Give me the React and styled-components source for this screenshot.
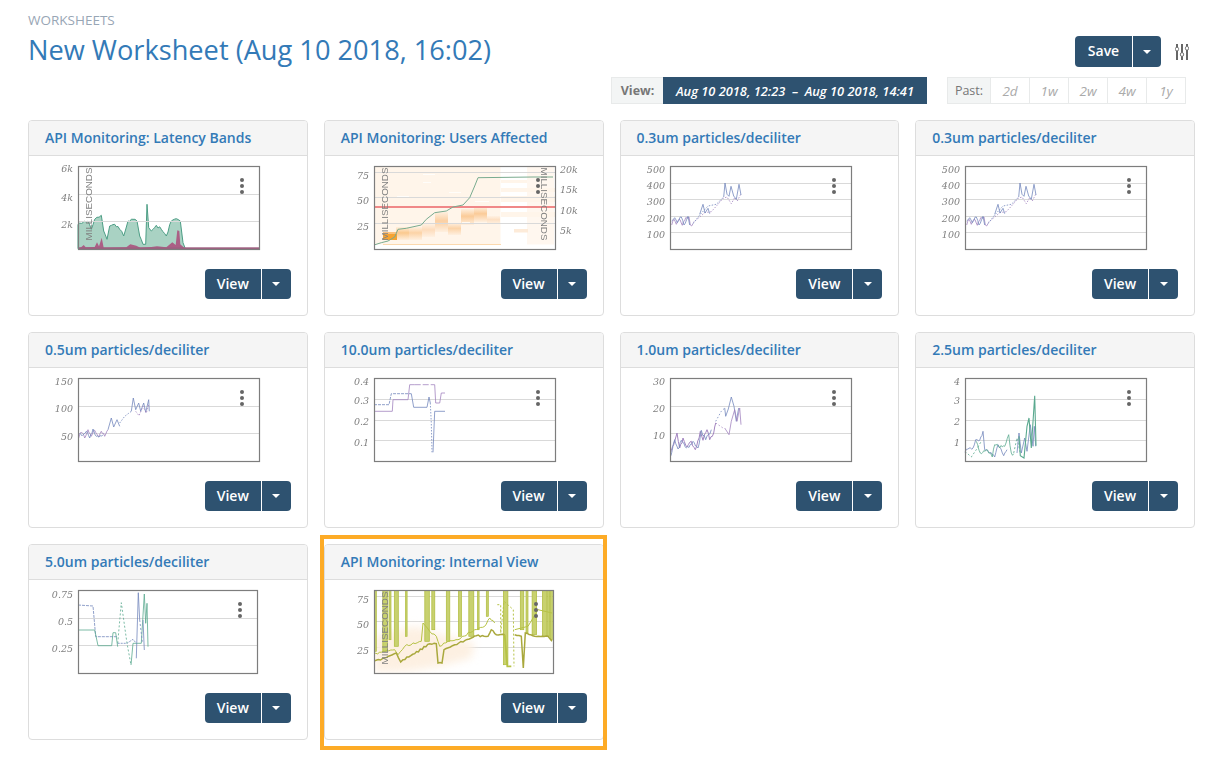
import React from "react";
import styled, { createGlobalStyle } from "styled-components";

const GlobalStyle = createGlobalStyle`
  html, body { margin: 0; padding: 0; background: #fff; }
  body { font-family: "Open Sans", "Liberation Sans", sans-serif; color: #333; }
`;

// points are read off 3x crops of the plots, so scale them back down
const parse = (str) =>
  str
    .trim()
    .split(/\s+/)
    .map((p) => p.split(",").map(Number));

const trace = (str, ox, oy) =>
  parse(str)
    .map(([x, y]) => `${((x - ox) / 3).toFixed(1)},${((y - oy) / 3).toFixed(1)}`)
    .join(" ");

// adds some noise along a traced line, the real data is never smooth
const rough = (str, amp, step = 6) => {
  const pts = parse(str);
  const out = [];
  pts.slice(1).forEach(([x, y], i) => {
    const [px, py] = pts[i];
    const n = Math.max(1, Math.round(Math.abs(x - px) / step));
    for (let k = 0; k < n; k++) {
      const t = k / n;
      const cx = px + (x - px) * t;
      const wob = k === 0 ? 0 : Math.sin(cx * 1.7) * amp + Math.sin(cx * 0.61) * amp * 0.7;
      out.push(`${cx.toFixed(1)},${(py + (y - py) * t + wob).toFixed(1)}`);
    }
  });
  const last = pts[pts.length - 1];
  out.push(`${last[0]},${last[1]}`);
  return out.join(" ");
};

const BLUE = "#7488bd";
const PURPLE = "#a284bf";
const TEAL = "#5aa98f";
const OLIVE = "#b6c245";

const Line = ({ points, color, dash, width = 0.8, ox, oy, noise }) => (
  <polyline
    points={trace(noise ? rough(points, noise, 4) : points, ox, oy)}
    fill="none"
    stroke={color}
    strokeWidth={width}
    strokeDasharray={dash}
  />
);

const Heat = () => {
  const blobs = [
    [22, 61, 13, "#fbc98e"], [35, 61, 13, "#fcd3a6"], [48, 58, 13, "#fddcbc"], [61, 46, 20, "#fbcfa2"],
    [74, 57, 12, "#fcd3a8"], [87, 43, 16, "#fbcb98"], [100, 41, 15, "#fbcb98"], [113, 50, 8, "#fde0c4"],
  ];
  return (
    <g>
      <defs>
        <linearGradient id="heatFade" x1="0" y1="0" x2="0" y2="1">
          <stop offset="0" stopColor="#fff3e6" stopOpacity="0.9" />
          <stop offset="0.45" stopColor="#fff3e6" stopOpacity="0" />
          <stop offset="1" stopColor="#fff3e6" stopOpacity="0.9" />
        </linearGradient>
      </defs>
      <rect x="0.5" y="0.5" width="126" height="78" fill="#fff5ea" />
      <rect x="153" y="0.5" width="27" height="78" fill="#fff7ef" />
      <rect x="127" y="14" width="26" height="3" fill="#fff5ea" />
      <rect x="127" y="22" width="54" height="4" fill="#fff5ea" />
      <rect x="127" y="30" width="54" height="6" fill="#fff5ea" />
      <rect x="127" y="46" width="54" height="5" fill="#fff5ea" />
      <rect x="140" y="63" width="14" height="3.5" fill="#fdebd9" />
      {blobs.map(([x, y, h, fill]) => (
        <g key={x}>
          <rect x={x} y={y} width="13" height={h} fill={fill} />
          <rect x={x} y={y} width="13" height={h} fill="url(#heatFade)" />
        </g>
      ))}
      <rect x="9" y="66" width="14" height="8" fill="#f6a332" />
      <rect x="9" y="66" width="14" height="2" fill="#fbc27d" />
      <rect x="9" y="78" width="118" height="1" fill="#fcd9ae" />
      <path d="M23 6h14v.8H23zM49 8h12v.8H49zM88 6h12v.8H88zM49 16h8v.8h-8zM23 30h12v.8H23zM75 26h12v.8H75zM101 35h14v.8h-14zM88 56h8v.8h-8z" fill="#fff" />
    </g>
  );
};

const Internal = () => {
  const bars = [
    [182, 365, 2], [211, 365, 4.5], [226, 330, 2], [245, 350, 4], [275, 320, 1.6], [337, 335, 4.5], [356, 300, 3],
    [400, 335, 3.5], [436, 320, 3], [470, 320, 5], [491, 300, 1.6], [518, 260, 2], [573, 405, 4.5],
    [622, 300, 3.5], [637, 310, 2], [659, 315, 4.5], [690, 320, 4.5], [702, 320, 2], [710, 330, 2],
  ];
  return (
    <g>
      <clipPath id="internalClip">
        <rect x="0" y="0" width="179" height="83" />
      </clipPath>
      <g clipPath="url(#internalClip)">
        <polygon
          points={trace("180,320 300,290 400,320 480,340 470,385 380,410 280,425 180,428", 178, 181)}
          fill="#fdf0e2"
          style={{ filter: "blur(4px)" }}
        />
        {bars.map(([x, y, w]) => (
          <rect
            key={x}
            x={((x - 178) / 3 - w / 2).toFixed(1)}
            y="-1"
            width={w}
            height={((y - 181) / 3 + 1).toFixed(1)}
            fill="#c8d16f"
            stroke="#aebb3a"
            strokeWidth="0.7"
          />
        ))}
        <Line ox={178} oy={181} color={OLIVE} width={1} points={rough("178,375 205,365 240,360 250,375 270,350 320,335 325,280 345,305 365,320 375,350 400,335 430,330 480,300 510,290 525,265 540,280", 2)} />
        <Line ox={178} oy={181} color={OLIVE} width={1} dash="2 2" points="548,225 558,225 558,310 568,215 596,240 598,410" />
        <Line ox={178} oy={181} color={OLIVE} width={1} points="600,300 640,290 670,240 712,250" />
        <Line ox={178} oy={181} color="#a9a83c" width={1.5} points={rough("178,395 210,385 245,370 258,397 265,390 300,372 345,342 365,342 370,400 382,400 388,360 420,345 470,325 485,318 520,320 530,300 545,315 570,315", 1.5)} />
        <Line ox={178} oy={181} color={OLIVE} width={1.8} points="570,315 578,410 590,410" />
        <Line ox={178} oy={181} color="#a9a83c" width={1.5} points={rough("600,315 620,320 626,415 632,310 660,320 700,320 712,335", 1.5)} />
      </g>
    </g>
  );
};

const Bands = () => (
  <g>
    <polygon
      points={trace(`175,403 ${rough("175,330 190,325 205,320 215,345 225,315 245,303 252,350 262,375 270,335 285,330 300,345 312,365 325,320 340,315 352,320 360,365 370,390 378,390", 2.5)} 382,270 387,340 ${rough("395,350 410,333 425,345 440,365 455,320 470,313 482,320 490,385", 2.5)} 497,403`, 175, 155)}
      fill="#a9d2c3"
      stroke="#4b9d84"
      strokeWidth="1"
    />
    <polygon
      points={trace("175,403 186,397 192,392 198,399 225,398 232,384 238,396 246,370 252,400 320,399 332,390 350,394 362,400 395,398 412,396 440,399 458,384 468,392 473,348 479,350 482,390 497,403", 175, 155)}
      fill="#ab5f85"
    />
    <rect x="0" y="81.3" width="181" height="1.7" fill="#9e6080" />
  </g>
);

const charts = {
  bands: {
    ticks: [["6k", 2], ["4k", 31], ["2k", 58]],
    grid: [28, 55],
    axis: true,
    Under: Bands,
  },
  users: {
    ticks: [["75", 9], ["50", 34], ["25", 60]],
    grid: [6, 31, 57],
    axis: true,
    right: [["20k", 3], ["15k", 23], ["10k", 44], ["5k", 64]],
    Under: Heat,
    lines: [
      { ox: 163, oy: 155, color: "#f08888", width: 2, points: "163,278 706,278" },
      { ox: 163, oy: 155, color: "#79ab8f", width: 1, points: "163,392 185,385 205,380 225,368 235,345 260,342 305,332 320,315 345,295 380,290 400,278 430,272 450,250 465,215 475,190 640,188 700,188" },
    ],
  },
  p03: {
    ticks: [["500", 3], ["400", 19], ["300", 35], ["200", 52], ["100", 68]],
    grid: [17, 33, 50, 66],
    lines: [
      { ox: 91, oy: 35, color: PURPLE, noise: 3, points: "96,212 103,195 110,210 118,195 128,213 138,190 148,188 152,212 160,208" },
      { ox: 91, oy: 35, color: BLUE, noise: 3, points: "96,200 105,190 113,205 125,188 133,212 145,186 150,212" },
      { ox: 91, oy: 35, color: PURPLE, dash: "1.5 1.5", points: "160,205 180,188 195,175 215,172 235,150 250,132 262,128 275,148 285,130 293,140 303,120" },
      { ox: 91, oy: 35, color: BLUE, dash: "1.5 1.5", points: "160,208 180,182 205,155 230,150 252,128" },
      { ox: 91, oy: 35, color: BLUE, points: "180,180 190,150 196,176 205,162 210,178" },
      { ox: 91, oy: 35, color: BLUE, points: "252,128 256,86 262,120 268,126 274,96 282,125 290,135 298,90 304,122" },
    ],
  },
  p05: {
    ticks: [["150", 3], ["100", 30], ["50", 58]],
    grid: [28, 55],
    lines: [
      { ox: 115, oy: 25, color: PURPLE, noise: 3, points: "117,205 125,187 135,205 145,180 155,200 165,182 175,200 185,185 195,200 205,180" },
      { ox: 115, oy: 25, color: BLUE, noise: 3, points: "120,190 130,195 140,185 150,205 160,178 170,200 190,195" },
      { ox: 115, oy: 25, color: BLUE, points: "205,180 215,145 222,172 232,150 240,170" },
      { ox: 115, oy: 25, color: BLUE, dash: "1.5 1.5", points: "240,160 255,140 275,125" },
      { ox: 115, oy: 25, color: BLUE, points: "275,125 281,85 288,120 297,100 303,125 312,100 318,128 327,90 329,125" },
      { ox: 115, oy: 25, color: PURPLE, dash: "1.5 1.5", points: "288,125 298,138 310,110 320,130 327,105" },
    ],
  },
  p10: {
    ticks: [["0.4", 3], ["0.3", 22], ["0.2", 43], ["0.1", 64]],
    grid: [21, 42, 62],
    lines: [
      { ox: 103, oy: 25, color: PURPLE, points: "103,125 158,125 160,90 205,90 210,45 225,45" },
      { ox: 103, oy: 25, color: PURPLE, dash: "6 2", points: "225,45 285,45" },
      { ox: 103, oy: 25, color: PURPLE, points: "285,45 288,100 300,100 305,70 316,70" },
      { ox: 103, oy: 25, color: BLUE, dash: "3 1", points: "103,105 148,105 155,72 215,72" },
      { ox: 103, oy: 25, color: BLUE, points: "215,72 222,113 262,113 268,82 272,100" },
      { ox: 103, oy: 25, color: BLUE, dash: "1.5 1.5", points: "272,100 275,160 277,248" },
      { ox: 103, oy: 25, color: BLUE, points: "280,248 285,125 316,125" },
    ],
  },
  p1: {
    ticks: [["30", 3], ["20", 30], ["10", 57]],
    grid: [28, 55],
    lines: [
      { ox: 121, oy: 25, color: PURPLE, width: 1, noise: 4, points: "122,250 132,225 142,190 150,235 160,205 172,232 185,215 197,240 212,185 220,212 232,180 240,210 252,190 258,160" },
      { ox: 121, oy: 25, color: BLUE, noise: 4, points: "124,258 135,210 145,238 155,212 170,235 190,215 205,235 215,182 228,210 245,180" },
      { ox: 121, oy: 25, color: BLUE, dash: "1.5 2", points: "258,155 275,125 285,115" },
      { ox: 121, oy: 25, color: BLUE, points: "285,115 288,140 296,118 305,82 313,110 320,155 327,115" },
      { ox: 121, oy: 25, color: PURPLE, dash: "1.5 2", points: "258,160 280,175" },
      { ox: 121, oy: 25, color: PURPLE, points: "285,175 298,195 305,155 315,120 322,155 330,115 334,165" },
    ],
  },
  p25: {
    ticks: [["4", 3], ["3", 22], ["2", 43], ["1", 64]],
    grid: [21, 42, 62],
    lines: [
      { ox: 106, oy: 25, color: BLUE, noise: 3, points: "106,248 118,236 130,235 138,210 150,212 160,185 165,240 180,250 195,262 205,225 222,258 232,240" },
      { ox: 106, oy: 25, color: TEAL, dash: "2 2", points: "106,245 125,262 140,240 155,215" },
      { ox: 106, oy: 25, color: TEAL, noise: 4, points: "140,215 152,250 170,240 188,262 195,225 210,235 225,230 237,195 245,250 252,252" },
      { ox: 106, oy: 25, color: TEAL, dash: "2 2", points: "252,250 262,205 272,250" },
      { ox: 106, oy: 25, color: BLUE, points: "262,250 268,190 275,250 285,205 292,245 302,165 310,230 314,170 318,230" },
      { ox: 106, oy: 25, color: TEAL, width: 1.1, points: "268,200 272,258 283,265 292,170 298,145 305,235 315,78 319,228" },
    ],
  },
  p5: {
    ticks: [["0.75", 4], ["0.5", 31], ["0.25", 58]],
    grid: [28, 55],
    plotW: 179,
    lines: [
      { ox: 115, oy: 30, color: BLUE, dash: "3 1", points: "115,75 160,78 168,170 232,170" },
      { ox: 115, oy: 30, color: TEAL, points: "115,150 165,150 175,197 216,197 220,158 228,158 234,200" },
      { ox: 115, oy: 30, color: BLUE, dash: "2 1", points: "234,190 262,190 280,178 290,190" },
      { ox: 115, oy: 30, color: TEAL, dash: "2 2", points: "234,190 245,68 262,190 274,255" },
      { ox: 115, oy: 30, color: TEAL, points: "274,255 280,190 305,190 314,42 318,130 322,70 325,200" },
      { ox: 115, oy: 30, color: BLUE, points: "290,235 296,38 300,120" },
      { ox: 115, oy: 30, color: BLUE, dash: "2 2", points: "300,120 308,185" },
      { ox: 115, oy: 30, color: BLUE, points: "310,120 314,210" },
    ],
  },
  internal: {
    ticks: [["75", 9], ["50", 34], ["25", 60]],
    grid: [6, 31, 57],
    plotW: 179,
    axis: true,
    Under: Internal,
  },
};

const cards = [
  { title: "API Monitoring: Latency Bands", chart: "bands" },
  { title: "API Monitoring: Users Affected", chart: "users" },
  { title: "0.3um particles/deciliter", chart: "p03" },
  { title: "0.3um particles/deciliter", chart: "p03" },
  { title: "0.5um particles/deciliter", chart: "p05" },
  { title: "10.0um particles/deciliter", chart: "p10" },
  { title: "1.0um particles/deciliter", chart: "p1" },
  { title: "2.5um particles/deciliter", chart: "p25" },
  { title: "5.0um particles/deciliter", chart: "p5" },
  { title: "API Monitoring: Internal View", chart: "internal", highlighted: true },
];

const Chart = ({ name }) => {
  const { ticks, grid, axis, right, Under, lines = [], plotW = 181 } = charts[name];
  return (
    <ChartBox>
      <svg width="270" height="100" viewBox="-49 -10 270 100">
        {Under && name !== "internal" && <Under />}
        {grid.map((y) => (
          <line key={y} x1="0" x2={plotW} y1={y + 0.5} y2={y + 0.5} stroke="#d9d9d9" />
        ))}
        {Under && name === "internal" && <Under />}
        {lines.map((l, i) => (
          <Line key={i} {...l} />
        ))}
        <rect x="0.5" y="0.5" width={plotW} height="83" fill="none" stroke="#7d7d7d" strokeWidth="1.2" />
        <AxisGroup>
          {ticks.map(([label, y]) => (
            <text key={label} x="-5" y={y + 3.5} textAnchor="end">
              {label}
            </text>
          ))}
          {right &&
            right.map(([label, y]) => (
              <text key={label} x="186" y={y + 3.5}>
                {label}
              </text>
            ))}
        </AxisGroup>
        {axis && (
          <UnitLabel transform="translate(14 38) rotate(-90)" textAnchor="middle">
            MILLISECONDS
          </UnitLabel>
        )}
        {right && (
          <UnitLabel transform="translate(166.5 38) rotate(90)" textAnchor="middle">
            MILLISECONDS
          </UnitLabel>
        )}
      </svg>
      <Kebab $narrow={plotW < 181}>
        <i />
        <i />
        <i />
      </Kebab>
    </ChartBox>
  );
};

const SplitButton = ({ label, $wide }) => (
  <ButtonGroup>
    <MainButton $wide={$wide}>{label}</MainButton>
    <CaretButton $wide={$wide}>
      <Caret />
    </CaretButton>
  </ButtonGroup>
);

const App = () => (
  <>
    <GlobalStyle />
    <Page>
      <Header>
        <div>
          <Crumb>Worksheets</Crumb>
          <Title>New Worksheet (Aug 10 2018, 16:02)</Title>
        </div>
        <Controls>
          <SaveRow>
            <SplitButton label="Save" $wide />
            <SettingsIcon width="14" height="16" viewBox="0 0 14 16">
              <path d="M2 0v16M7 0v16M12 0v16" stroke="#666" strokeWidth="2" fill="none" />
              <rect x="0.4" y="3.4" width="3.2" height="3.4" rx="1.2" fill="#fff" stroke="#666" strokeWidth="0.9" />
              <rect x="5.4" y="8.8" width="3.2" height="3.4" rx="1.2" fill="#fff" stroke="#666" strokeWidth="0.9" />
              <rect x="10.4" y="2.6" width="3.2" height="3.4" rx="1.2" fill="#fff" stroke="#666" strokeWidth="0.9" />
            </SettingsIcon>
          </SaveRow>
          <RangeRow>
            <RangeGroup>
              <RangeLabel $width={51}>View:</RangeLabel>
              <RangeValue>Aug 10 2018, 12:23 {" – "} Aug 10 2018, 14:41</RangeValue>
            </RangeGroup>
            <RangeGroup>
              <RangeLabel $width={42} $light>Past:</RangeLabel>
              {["2d", "1w", "2w", "4w", "1y"].map((p) => (
                <PastOption key={p}>{p}</PastOption>
              ))}
            </RangeGroup>
          </RangeRow>
        </Controls>
      </Header>
      <CardGrid>
        {cards.map((c, i) => (
          <Card key={i} $highlighted={c.highlighted}>
            <CardHeader>{c.title}</CardHeader>
            <Chart name={c.chart} />
            <CardFooter>
              <SplitButton label="View" />
            </CardFooter>
          </Card>
        ))}
      </CardGrid>
    </Page>
  </>
);

const Page = styled.div`
  width: 1217px;
  height: 775px;
  box-sizing: border-box;
  padding: 0 22px 0 28px;
  overflow: hidden;
`;
const Header = styled.div`
  height: 120px;
  display: flex;
  justify-content: space-between;
`;
const Crumb = styled.div`
  margin-top: 11px;
  font-size: 13.5px;
  line-height: 18px;
  color: #98a6b5;
  text-transform: uppercase;
`;
const Title = styled.h1`
  margin: 2px 0 0;
  font-size: 27.2px;
  line-height: 37px;
  font-weight: 400;
  color: #337ab7;
`;
const Controls = styled.div`
  display: flex;
  flex-direction: column;
  align-items: flex-end;
  padding: 36px 9px 0 0;
`;
const SaveRow = styled.div`
  display: flex;
  align-items: center;
`;
const SettingsIcon = styled.svg`
  margin-left: 14px;
  margin-right: -3px;
  display: block;
`;
const RangeRow = styled.div`
  display: flex;
  gap: 20px;
  margin-top: 10px;
`;
const RangeGroup = styled.div`
  display: flex;
  height: 27px;
  box-sizing: border-box;
  border: 1px solid #e8eaea;
`;
const RangeLabel = styled.div`
  width: ${(p) => p.$width}px;
  box-sizing: border-box;
  display: flex;
  align-items: center;
  justify-content: center;
  background: #f3f5f5;
  font-size: 12.5px;
  font-weight: ${(p) => (p.$light ? 400 : 700)};
  color: #777;
`;
const RangeValue = styled.div`
  width: 264px;
  display: flex;
  align-items: center;
  justify-content: center;
  margin: -1px -1px -1px 0;
  background: #2e5270;
  color: #fff;
  font-size: 12.8px;
  font-weight: 600;
  font-style: italic;
  white-space: pre;
`;
const PastOption = styled.div`
  width: 39px;
  box-sizing: border-box;
  border-left: 1px solid #e8eaea;
  display: flex;
  align-items: center;
  justify-content: center;
  font-size: 13.5px;
  font-style: italic;
  color: #aaa;
`;
const CardGrid = styled.div`
  display: grid;
  grid-template-columns: repeat(4, 1fr);
  gap: 16px;
`;
const Card = styled.div`
  position: relative;
  height: 196px;
  box-sizing: border-box;
  border: 1px solid #ddd;
  border-radius: 4px;
  display: flex;
  flex-direction: column;
  ${(p) =>
    p.$highlighted &&
    `
    &::after {
      content: "";
      position: absolute;
      left: -5px;
      right: -4px;
      top: -10px;
      bottom: -11px;
      border: 4px solid #fdab26;
    }
  `}
`;
const CardHeader = styled.div`
  height: 35px;
  box-sizing: border-box;
  padding: 0 16px 2px;
  display: flex;
  align-items: center;
  background: #f5f5f5;
  border-bottom: 1px solid #ddd;
  border-radius: 3px 3px 0 0;
  font-size: 14px;
  font-weight: 600;
  color: #337ab7;
`;
const ChartBox = styled.div`
  position: relative;
  height: 100px;
  svg {
    display: block;
    filter: blur(0.3px);
  }
`;
const AxisGroup = styled.g`
  font-family: "DejaVu Serif", serif;
  font-style: italic;
  font-size: 9.5px;
  fill: #808080;
`;
const UnitLabel = styled.text`
  font-family: "Liberation Sans", sans-serif;
  font-size: 9.8px;
  fill: #808080;
`;
const Kebab = styled.div`
  position: absolute;
  left: ${(p) => (p.$narrow ? 209 : 211)}px;
  top: 22px;
  display: flex;
  flex-direction: column;
  gap: 2px;
  i {
    display: block;
    width: 4px;
    height: 4px;
    border-radius: 50%;
    background: #666;
  }
`;
const CardFooter = styled.div`
  display: flex;
  justify-content: flex-end;
  padding: 13px 16px 0;
`;
const ButtonGroup = styled.div`
  display: flex;
  gap: 1px;
`;
const MainButton = styled.div`
  width: ${(p) => (p.$wide ? 57 : 56)}px;
  height: ${(p) => (p.$wide ? 31 : 30)}px;
  box-sizing: border-box;
  padding-bottom: 2px;
  display: flex;
  align-items: center;
  justify-content: center;
  background: #2e5270;
  border-radius: 4px 0 0 4px;
  color: #fff;
  font-size: 14px;
  font-weight: 600;
`;
const CaretButton = styled.div`
  width: ${(p) => (p.$wide ? 28 : 29)}px;
  display: flex;
  align-items: center;
  justify-content: center;
  background: #2e5270;
  border-radius: 0 4px 4px 0;
`;
const Caret = styled.span`
  width: 0;
  height: 0;
  border-left: 4px solid transparent;
  border-right: 4px solid transparent;
  border-top: 4px solid #fff;
`;

export default App;
